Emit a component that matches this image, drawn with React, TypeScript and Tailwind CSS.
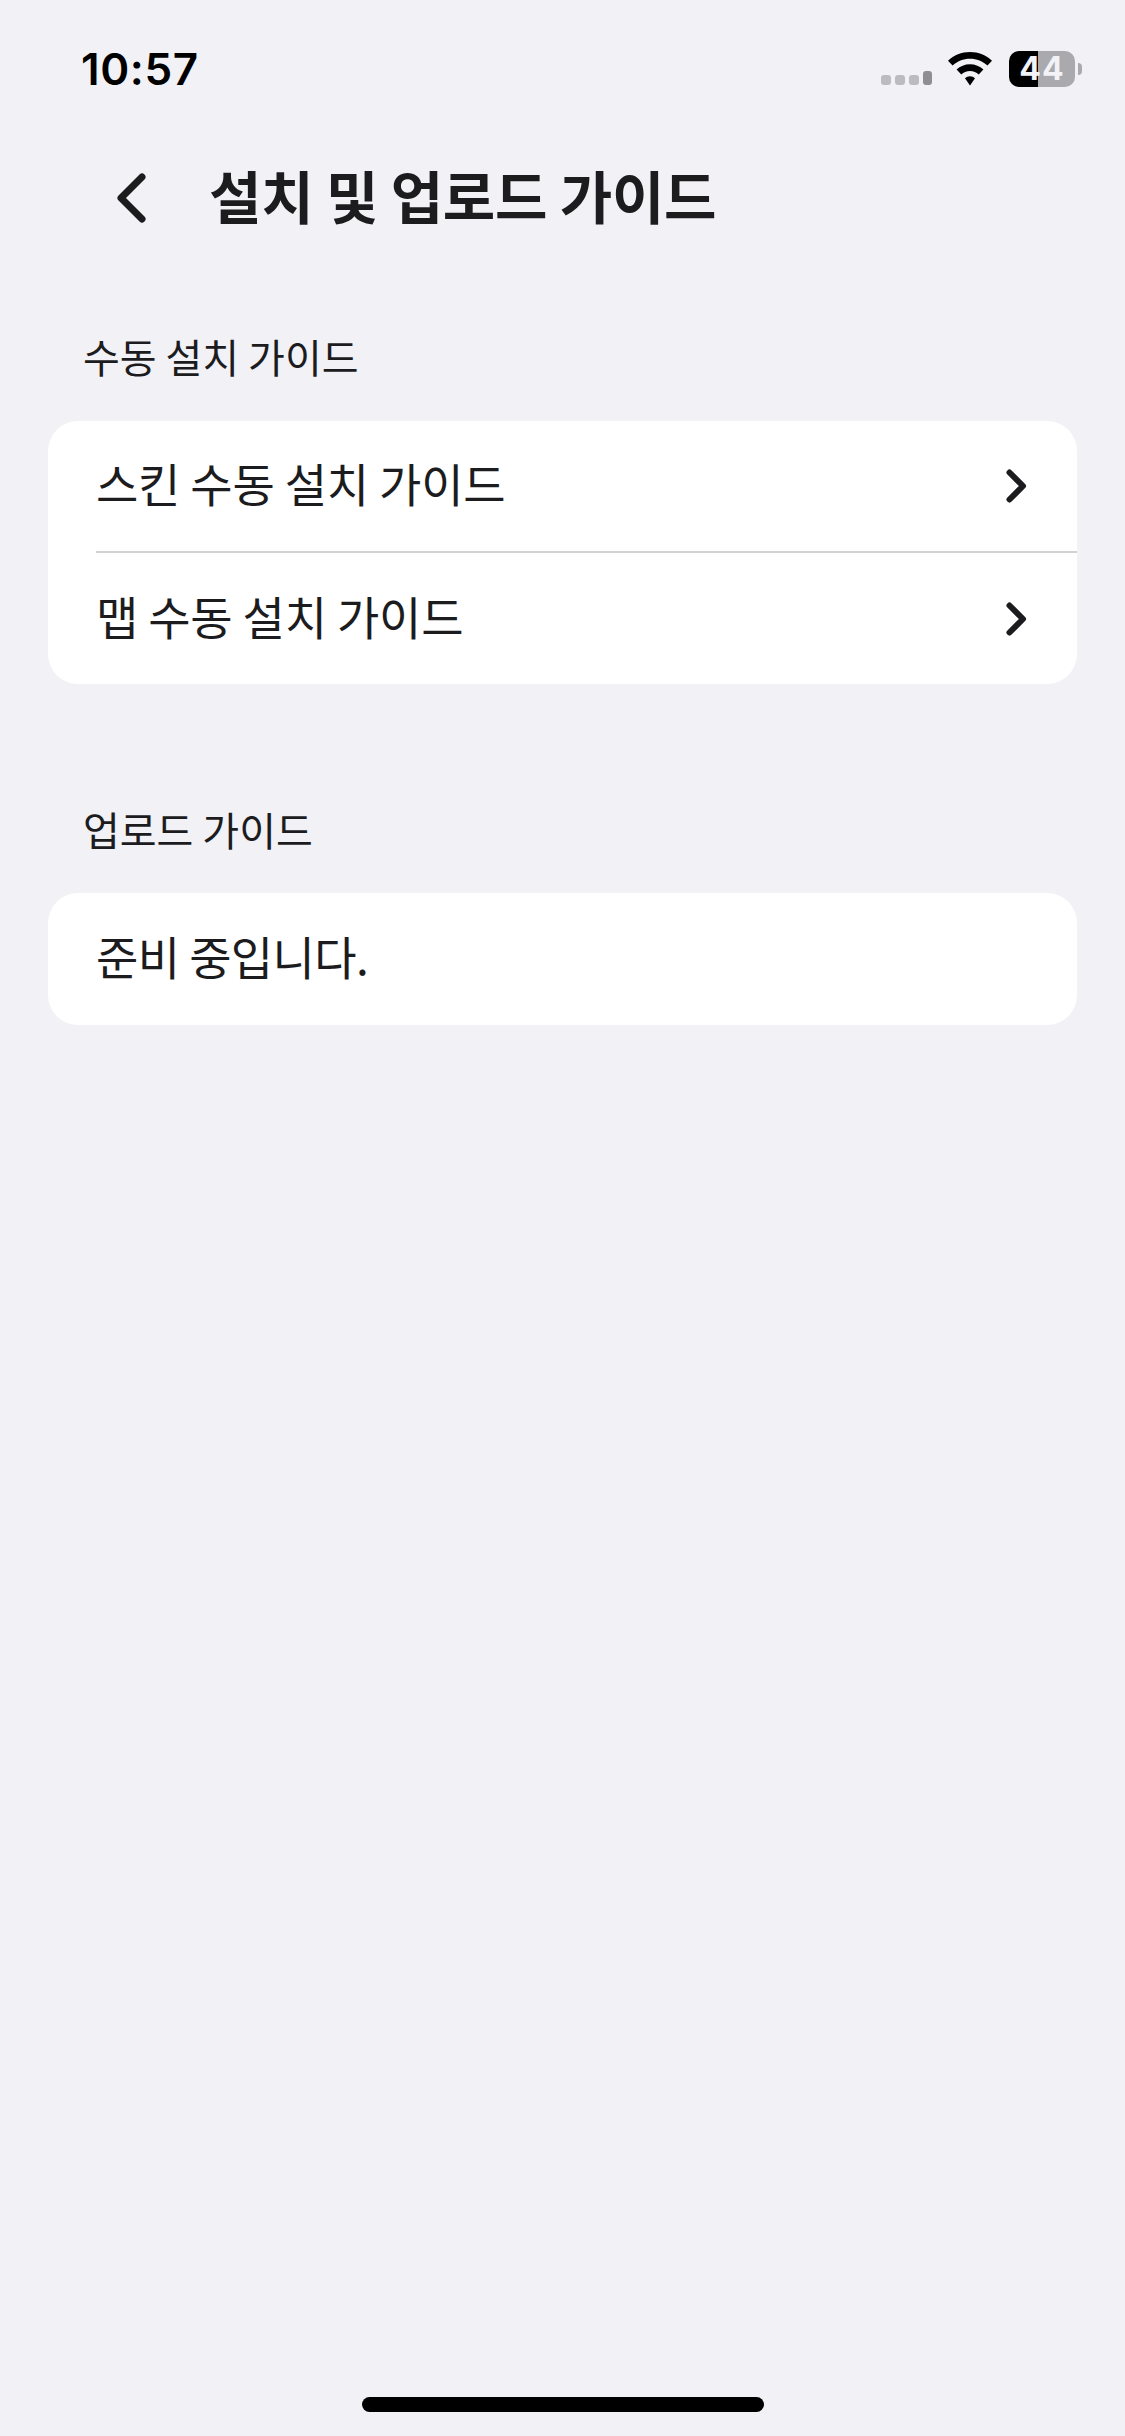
const fontKr = "font-['Noto_Sans_CJK_KR','Liberation_Sans',sans-serif]";

const Chevron = () => (
  <svg width="24" height="36" viewBox="0 0 24 36" fill="none" className="shrink-0">
    <path d="M5.500 4.500L19 18L5.500 31.500" stroke="#1c1c1e" strokeWidth="6" strokeLinecap="round" strokeLinejoin="round" />
  </svg>
);

const StatusBar = () => (
  <div className="flex items-center justify-between h-[36px] mt-[51px] pl-[81px] pr-[43px]">
    <span className="font-['Inter',sans-serif] font-semibold text-[44px] leading-[36px] tracking-[0.6px] text-black">10:57</span>
    <div className="flex items-center">
      <div className="flex items-end gap-[4px] h-[36px] pb-[2px]">
        <div className="w-[10px] h-[10px] rounded-[3px] bg-[#bcbcc0]" />
        <div className="w-[10px] h-[10px] rounded-[3px] bg-[#bcbcc0]" />
        <div className="w-[10px] h-[10px] rounded-[3px] bg-[#bcbcc0]" />
        <div className="w-[9px] h-[14px] rounded-[3px] bg-[#8e8e93]" />
      </div>
      <svg width="46" height="34" viewBox="0 0 46 34" className="ml-[15px]">
        <path d="M23 0C14.500 0 6.800 3.300 1 8.700L5.600 13.600C10.200 9.300 16.300 6.700 23 6.700C29.700 6.700 35.800 9.300 40.400 13.600L45 8.700C39.200 3.300 31.500 0 23 0Z" fill="#000" />
        <path d="M23 12.200C17.800 12.200 13.100 14.200 9.600 17.500L14.300 22.500C16.600 20.400 19.600 19 23 19C26.400 19 29.400 20.400 31.700 22.500L36.400 17.500C32.900 14.200 28.200 12.200 23 12.200Z" fill="#000" />
        <path d="M23 24.300C21 24.300 19.300 25 18 26.300L23 33.500L28 26.300C26.700 25 25 24.300 23 24.300Z" fill="#000" />
      </svg>
      <div className="relative ml-[16px] flex w-[66px] h-[36px]">
        <div className="w-[29px] bg-black rounded-l-[10px]" />
        <div className="flex-1 bg-[#a9a9ae] rounded-r-[10px]" />
        <span className="absolute inset-0 flex items-center justify-center font-['Inter',sans-serif] font-bold text-[32px] leading-[36px] tracking-[1px] text-[#f2f2f7]">44</span>
      </div>
      <div className="ml-[3px] w-[4px] h-[12px] rounded-r-full bg-[#a9a9ae]" />
    </div>
  </div>
);

const SectionLabel = ({ text, className }: { text: string; className: string }) => (
  <div className={`h-[48px] pl-[83px] flex items-center text-[40px] leading-[48px] text-[#1c1c1e] ${className}`}>
    <span className="mb-[4px]">{text}</span>
  </div>
);

const GuideRow = ({ label, divider }: { label: string; divider?: boolean }) => (
  <div className={`ml-[48px] pr-[49px] flex items-center justify-between ${divider ? "h-[132px] border-b-2 border-[#d2d2d5]" : "h-[131px]"}`}>
    <span className="mb-[8px] text-[46px] leading-[60px] tracking-[-0.2px] text-[#1c1c1e]">{label}</span>
    <Chevron />
  </div>
);

export default function App() {
  return (
    <div className={`min-h-[2436px] bg-[#f1f1f6] flex flex-col ${fontKr}`}>
      <StatusBar />

      <div className="flex items-center h-[80px] mt-[71px] pl-[116px]">
        <svg width="30" height="50" viewBox="0 0 30 50" fill="none" className="shrink-0">
          <path d="M26 4L5 25L26 46" stroke="#1c1c1e" strokeWidth="7" strokeLinecap="round" strokeLinejoin="round" />
        </svg>
        <h1 className="ml-[63px] mb-[8px] text-[57px] leading-[80px] tracking-[-0.3px] font-bold text-[#1c1c1e]">설치 및 업로드 가이드</h1>
      </div>

      <SectionLabel text="수동 설치 가이드" className="mt-[96px]" />
      <div className="mt-[39px] mx-[48px] bg-white rounded-[30px] overflow-hidden">
        <GuideRow label="스킨 수동 설치 가이드" divider />
        <GuideRow label="맵 수동 설치 가이드" />
      </div>

      <SectionLabel text="업로드 가이드" className="mt-[123px]" />
      <div className="mt-[38px] mx-[48px] h-[132px] px-[48px] flex items-center bg-white rounded-[30px]">
        <span className="mb-[8px] text-[46px] leading-[60px] tracking-[-0.6px] text-[#1c1c1e]">준비 중입니다.</span>
      </div>

      <div className="mt-auto mb-[24px] mx-auto w-[402px] h-[15px] rounded-full bg-black" />
    </div>
  );
}
